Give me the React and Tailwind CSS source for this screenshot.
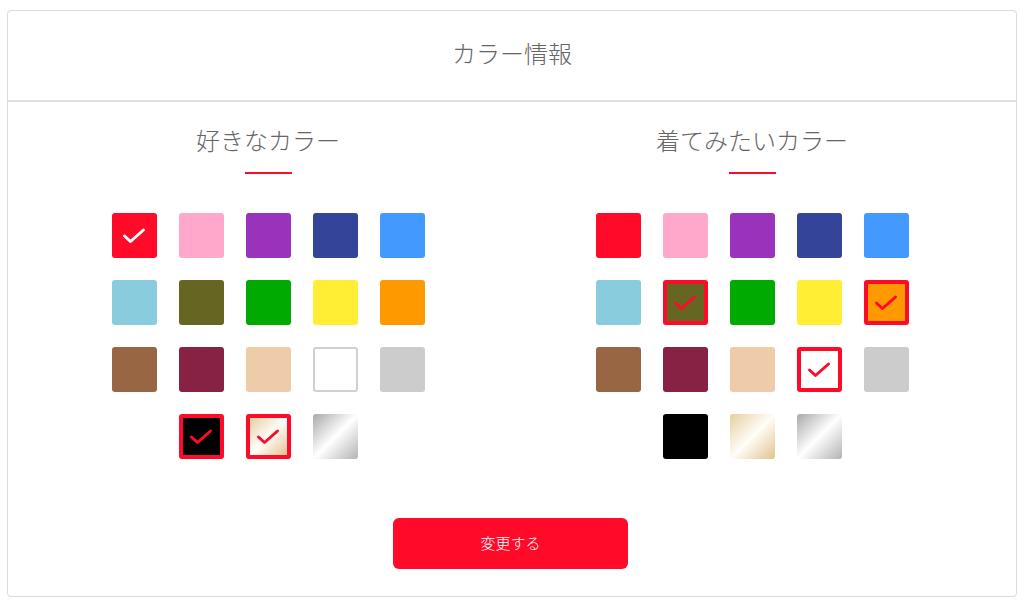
import React, { useState } from "react";

const COLORS = [
  { id: "red", bg: "bg-[#ff0a28]" },
  { id: "pink", bg: "bg-[#ffa8cc]" },
  { id: "purple", bg: "bg-[#9933bb]" },
  { id: "navy", bg: "bg-[#334499]" },
  { id: "blue", bg: "bg-[#4499ff]" },
  { id: "lightblue", bg: "bg-[#88ccdd]" },
  { id: "olive", bg: "bg-[#666622]" },
  { id: "green", bg: "bg-[#00aa00]" },
  { id: "yellow", bg: "bg-[#ffee33]" },
  { id: "orange", bg: "bg-[#ff9900]" },
  { id: "brown", bg: "bg-[#996644]" },
  { id: "maroon", bg: "bg-[#882244]" },
  { id: "beige", bg: "bg-[#eeccaa]" },
  { id: "white", bg: "bg-white" },
  { id: "gray", bg: "bg-[#cccccc]" },
  { id: "black", bg: "bg-black" },
  { id: "gold", bg: "bg-[linear-gradient(135deg,#e6cfa0_0%,#fffdf8_50%,#e2c28e_100%)]" },
  { id: "silver", bg: "bg-[linear-gradient(135deg,#a9a9a9_0%,#ffffff_50%,#b3b3b3_100%)]" },
];

function Check({ white }) {
  return (
    <svg width="24" height="18" viewBox="0 0 24 18" fill="none">
      <path
        d="M2.5 9 L8.5 14.5 L21.5 3"
        stroke={white ? "#ffffff" : "#ff0a28"}
        strokeWidth="3"
        strokeLinecap="round"
        strokeLinejoin="round"
      />
    </svg>
  );
}

function Swatch({ color, selected, onClick }) {
  let border = "border-0";
  if (selected && color.id !== "red") border = "border-[4px] border-[#ff0a28]";
  else if (color.id === "white") border = "border-2 border-[#d0d0d0]";
  return (
    <button
      onClick={onClick}
      className={`w-[45px] h-[45px] rounded-[3px] bg-clip-padding flex items-center justify-center ${color.bg} ${border}`}
    >
      {selected && <Check white={color.id === "red"} />}
    </button>
  );
}

function Palette({ title, initial }) {
  const [picked, setPicked] = useState(initial);
  const toggle = (id) =>
    setPicked((p) => (p.includes(id) ? p.filter((x) => x !== id) : [...p, id]));

  return (
    <div className="flex flex-col items-center">
      <h3 className="text-[24px] leading-[36px] text-[#666] font-light">{title}</h3>
      <div className="w-[47px] h-[2px] bg-[#ff0a28] mt-[14px]"></div>
      <div className="w-[313px] flex flex-wrap justify-center gap-[22px] mt-[39px]">
        {COLORS.map((c) => (
          <Swatch key={c.id} color={c} selected={picked.includes(c.id)} onClick={() => toggle(c.id)} />
        ))}
      </div>
    </div>
  );
}

export default function App() {
  return (
    <div
      className="bg-white min-h-[607px] pt-[10px] px-[7px]"
      style={{ fontFamily: '"Noto Sans CJK JP", "Noto Sans", sans-serif' }}
    >
      <div className="border border-[#dcdcdc] rounded-[4px]">
        <div className="h-[91px] pb-[6px] flex items-center justify-center border-b-2 border-[#e0e0e0]">
          <h2 className="text-[24px] text-[#666] font-light">カラー情報</h2>
        </div>

        <div className="grid grid-cols-2 pl-[18px] pr-[22px] pt-[20px]">
          <Palette title="好きなカラー" initial={["red", "black", "gold"]} />
          <Palette title="着てみたいカラー" initial={["olive", "orange", "white"]} />
        </div>

        <div className="flex justify-center pt-[59px] pb-[27px] pr-[3px]">
          <button className="w-[235px] h-[51px] rounded-[6px] bg-[#ff0a28] text-white text-[15px] font-light">
            変更する
          </button>
        </div>
      </div>
    </div>
  );
}
